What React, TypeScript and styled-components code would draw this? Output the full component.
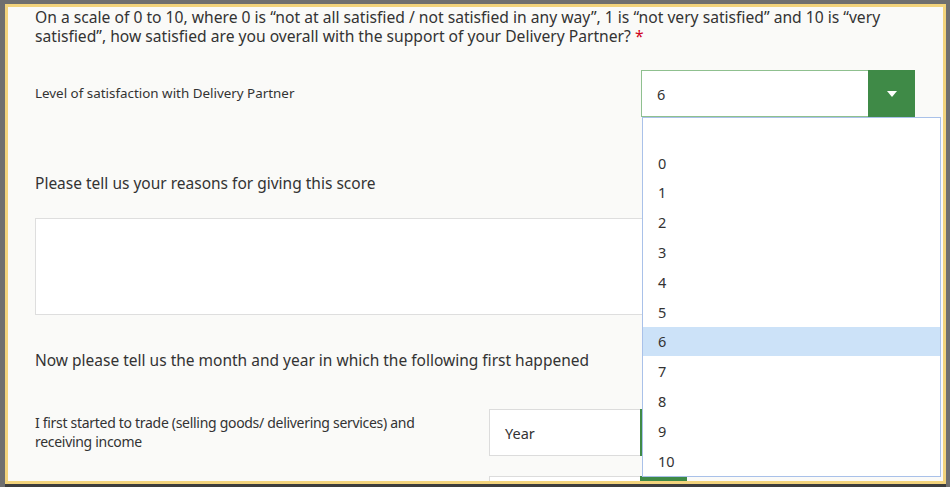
import React from "react";
import styled, { createGlobalStyle } from "styled-components";

const Global = createGlobalStyle`
  html, body { margin: 0; padding: 0; }
  body {
    width: 950px;
    height: 487px;
    overflow: hidden;
    background: #6f6f6f;
    font-family: "Noto Sans", "Open Sans", sans-serif;
    color: #333;
  }
`;

const Frame = styled.div`
  margin: 4px 4px 0 5px;
  height: 474px;
  border: 3px solid #f2d37c;
  background: #fafaf8;
  overflow: hidden;
  box-shadow: 0 3px 0 #3d3d3d;
`;

const Content = styled.div`
  padding: 0 28px 0 27px;
  margin-top: 1px;
  display: flex;
  flex-direction: column;
`;

const Question = styled.p`
  margin: 0;
  max-width: 870px;
  font-size: 15.65px;
  line-height: 19px;
`;

const Required = styled.span`
  color: #d0021b;
`;

const Heading = styled.p<{ $top: number }>`
  margin: ${(p) => p.$top}px 0 0;
  font-size: 15.5px;
  line-height: 19px;
`;

const Row = styled.div<{ $top: number; $cols: string }>`
  margin-top: ${(p) => p.$top}px;
  display: grid;
  grid-template-columns: ${(p) => p.$cols};
  align-items: center;
`;

const Label = styled.div`
  font-size: 13.4px;
  line-height: 19px;
`;

const NarrowLabel = styled(Label)`
  align-self: start;
  margin-top: 4px;
  font-size: 14px;
  letter-spacing: -0.3px;
  padding-right: 36px;
`;

const SelectStack = styled.div`
  display: flex;
  flex-direction: column;
  gap: 20px;
`;

const SelectBox = styled.div<{ $width: number; $focus?: boolean }>`
  position: relative;
  width: ${(p) => p.$width}px;
  height: 47px;
  display: flex;
  box-sizing: border-box;
  border: 1px solid ${(p) => (p.$focus ? "#8fc08f" : "#dcdcdc")};
  background: #fff;
`;

const SelectValue = styled.div`
  flex: 1;
  display: flex;
  align-items: center;
  padding-left: 15px;
  font-size: 14.5px;
`;

const SelectButton = styled.div`
  width: 47px;
  margin: -1px -1px -1px 0;
  background: #3f8a47;
  display: flex;
  align-items: center;
  justify-content: center;
`;

const Caret = styled.span`
  width: 0;
  height: 0;
  border-left: 5px solid transparent;
  border-right: 5px solid transparent;
  border-top: 6px solid #fff;
`;

const TextArea = styled.div`
  margin-top: 25px;
  height: 97px;
  box-sizing: border-box;
  border: 1px solid #dedede;
  background: #fff;
`;

const Dropdown = styled.ul`
  position: absolute;
  top: 46px;
  left: 0;
  width: 299px;
  margin: 0;
  padding: 0;
  list-style: none;
  box-sizing: border-box;
  border: 1px solid #a9c1e9;
  background: #fff;
  z-index: 5;
`;

const Option = styled.li<{ $selected?: boolean }>`
  height: 29.8px;
  display: flex;
  align-items: center;
  padding-left: 15px;
  font-size: 14.5px;
  background: ${(p) => (p.$selected ? "#cce2f8" : "transparent")};
`;

const options = ["", "0", "1", "2", "3", "4", "5", "6", "7", "8", "9", "10"];

export default function App() {
  return (
    <>
      <Global />
      <Frame>
        <Content>
          <Question>
            On a scale of 0 to 10, where 0 is “not at all satisfied / not satisfied in any way”, 1 is
            “not very satisfied” and 10 is “very satisfied”, how satisfied are you overall with the
            support of your Delivery Partner? <Required>*</Required>
          </Question>
          <Row $top={24} $cols="606px 274px">
            <Label>Level of satisfaction with Delivery Partner</Label>
            <SelectBox $width={274} $focus>
              <SelectValue>6</SelectValue>
              <SelectButton>
                <Caret />
              </SelectButton>
              <Dropdown>
                {options.map((o, i) => (
                  <Option key={i} $selected={o === "6"}>
                    {o}
                  </Option>
                ))}
              </Dropdown>
            </SelectBox>
          </Row>
          <Heading $top={57}>Please tell us your reasons for giving this score</Heading>
          <TextArea />
          <Heading $top={36}>Now please tell us the month and year in which the following first happened</Heading>
          <Row $top={39} $cols="454px 198px">
            <NarrowLabel>I first started to trade (selling goods/ delivering services) and receiving income</NarrowLabel>
            <SelectStack>
              <SelectBox $width={198}>
                <SelectValue>Year</SelectValue>
                <SelectButton>
                  <Caret />
                </SelectButton>
              </SelectBox>
              <SelectBox $width={198}>
                <SelectValue>Month</SelectValue>
                <SelectButton>
                  <Caret />
                </SelectButton>
              </SelectBox>
            </SelectStack>
          </Row>
        </Content>
      </Frame>
    </>
  );
}
